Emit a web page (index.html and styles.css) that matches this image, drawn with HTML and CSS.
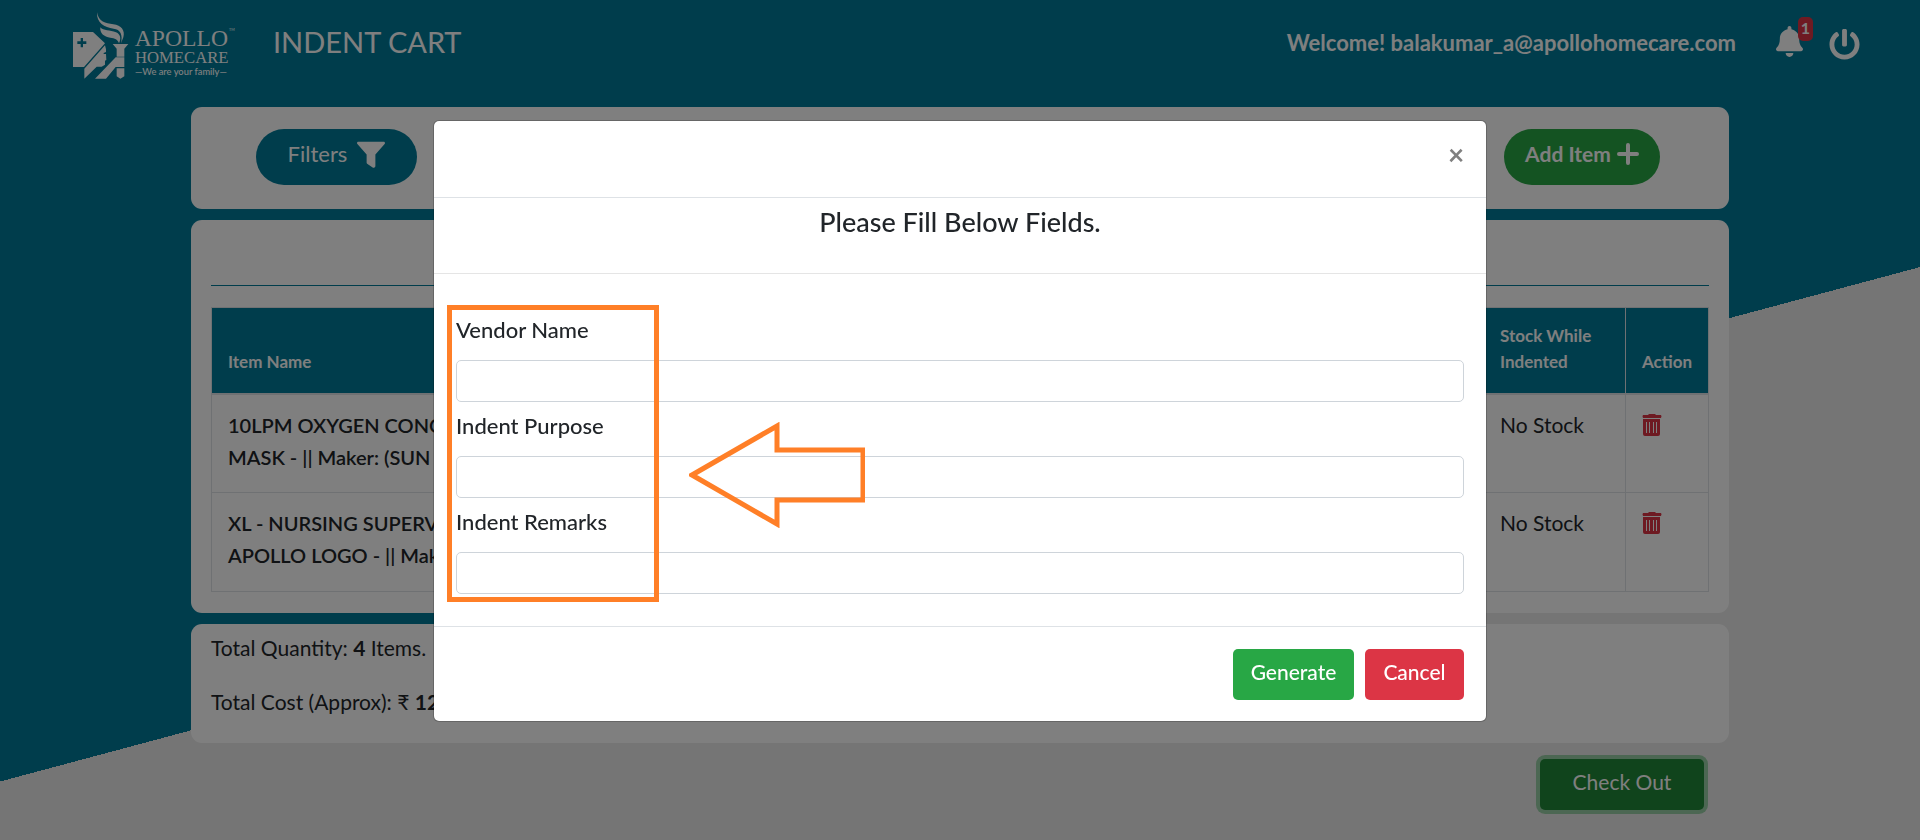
FILE: index.html
```html
<!DOCTYPE html>
<html lang="en">
<head>
<meta charset="utf-8">
<title>Indent Cart</title>
<link rel="stylesheet" href="styles.css">
</head>
<body>
<div class="page">
  <header class="topbar">
    <svg class="logo" viewBox="60 30 510 216" role="img" aria-label="Apollo Homecare">
      <path d="M141 37C146 66 166 70 190 73C214 76 226 92 220 112L213 130C219 104 211 88 191 86C163 83 139 68 141 37Z"/>
      <path d="M151 82C160 93 180 90 198 97C212 103 214 116 207 130C204 118 194 114 181 113C162 111 149 100 151 82Z"/>
      <path fill-rule="evenodd" d="M69 96H129L165 130L102 201H69ZM92 114V124H82V132H92V142H99V132H109V124H99V114Z"/>
      <path d="M103 206L165 136L168 148V156L161 159V162L168 162L169 180L165 182V194L155 200H140L103 236Z"/>
      <path d="M188 132H235L223 146V170H200V146Z"/>
      <path d="M197 172H223V201H197L168 236H135Z"/>
      <path d="M200 205H223V229L211 236L200 229Z"/>
      <text class="logo-name" x="254" y="138">APOLLO</text>
      <text class="logo-sub" x="255" y="190">HOMECARE</text>
      <text class="logo-tag" x="255" y="226">—We are your family—</text>
      <text class="logo-tm" x="537" y="92">TM</text>
    </svg>
    <h1 class="title">INDENT CART</h1>
    <span class="welcome">Welcome! balakumar_a@apollohomecare.com</span>
    <button class="icon-btn bell" type="button" aria-label="Notifications">
      <svg viewBox="0 0 448 512" width="27" height="31"><path d="M224 512c35.320 0 63.970-28.650 63.970-64H160.030c0 35.350 28.650 64 63.970 64zm215.390-149.710c-19.320-20.760-55.470-51.990-55.470-154.290 0-77.700-54.480-139.900-127.940-155.160V32c0-17.670-14.320-32-31.980-32s-31.980 14.330-31.980 32v20.840C118.560 68.100 64.080 130.300 64.080 208c0 102.300-36.150 133.530-55.470 154.290-6 6.450-8.660 14.160-8.610 21.710.110 16.400 12.980 32 32.100 32h383.800c19.120 0 32-15.600 32.100-32 .050-7.550-2.610-15.270-8.610-21.710z"/></svg>
      <span class="count">1</span>
    </button>
    <button class="icon-btn" type="button" aria-label="Log out">
      <svg viewBox="0 0 512 512" width="31" height="31"><path d="M400 54.100c63 45 104 118.600 104 201.900 0 136.800-110.800 247.700-247.500 248C120 504.300 8.200 393 8 256.400 7.900 173.100 48.900 99.300 111.800 54.200c11.700-8.300 28-4.800 35 7.700L162.600 90c5.900 10.500 3.100 23.800-6.600 31-41.500 30.800-68 79.600-68 134.900-.1 92.300 74.500 168.100 168 168.100 91.600 0 168.600-74.200 168-169.100-.3-51.800-24.700-101.800-68.100-134-9.700-7.200-12.400-20.500-6.500-30.900l15.800-28.100c7-12.400 23.200-16.100 34.800-7.800zM296 264V24c0-13.300-10.700-24-24-24h-32c-13.300 0-24 10.700-24 24v240c0 13.300 10.700 24 24 24h32c13.300 0 24-10.700 24-24z"/></svg>
    </button>
  </header>

  <main class="content">
    <section class="card tools">
      <button class="pill filters" type="button">Filters
        <svg viewBox="0 0 512 512" width="28" height="28"><path d="M488 32H24C3 32-8 57 7 72L176 267V416C176 424 180 431 186 436L286 503C302 514 336 503 336 480V267L505 72C520 57 509 32 488 32Z"/></svg>
      </button>
      <button class="pill add" type="button">Add Item
        <svg viewBox="0 0 22 22" width="22" height="22"><path d="M11 2V20M2 11H20" stroke="currentColor" stroke-width="4" stroke-linecap="round"/></svg>
      </button>
    </section>

    <section class="card items">
      <hr class="rule">
      <table class="table">
        <thead>
          <tr><th>Item Name</th><th class="col-stock">Stock While Indented</th><th class="col-action">Action</th></tr>
        </thead>
        <tbody>
          <tr>
            <td class="name">10LPM OXYGEN CONC<br>MASK - || Maker: (SUN</td>
            <td>No Stock</td>
            <td><button class="trash" type="button" aria-label="Delete"><svg viewBox="0 0 20 22" width="20" height="22"><path fill-rule="evenodd" d="M1 1H6L7 0H13L14 1H19Q20 2 19 4H1Q0 2 1 1ZM1 5H18V20Q18 22 16 22H3Q1 22 1 20ZM4 8V19H5V8ZM7 8V19H8V8ZM11 8V19H12V8ZM14 8V19H15V8Z"/></svg></button></td>
          </tr>
          <tr>
            <td class="name">XL - NURSING SUPERV<br>APOLLO LOGO - || Mak</td>
            <td>No Stock</td>
            <td><button class="trash" type="button" aria-label="Delete"><svg viewBox="0 0 20 22" width="20" height="22"><path fill-rule="evenodd" d="M1 1H6L7 0H13L14 1H19Q20 2 19 4H1Q0 2 1 1ZM1 5H18V20Q18 22 16 22H3Q1 22 1 20ZM4 8V19H5V8ZM7 8V19H8V8ZM11 8V19H12V8ZM14 8V19H15V8Z"/></svg></button></td>
          </tr>
        </tbody>
      </table>
    </section>

    <section class="card totals">
      <p>Total Quantity: <b>4</b> Items.</p>
      <p>Total Cost (Approx): ₹ <b>12</b></p>
    </section>

    <div class="checkout-row"><button class="btn checkout" type="button">Check Out</button></div>
  </main>
</div>

<div class="backdrop">
  <form class="modal" role="dialog" aria-labelledby="modal-title">
    <div class="modal-head"><button class="close" type="button" aria-label="Close">×</button></div>
    <h2 class="modal-title" id="modal-title">Please Fill Below Fields.</h2>
    <div class="modal-body">
      <label class="label" for="vendor">Vendor Name</label>
      <input class="input" id="vendor" type="text">
      <label class="label" for="purpose">Indent Purpose</label>
      <input class="input" id="purpose" type="text">
      <label class="label" for="remarks">Indent Remarks</label>
      <input class="input" id="remarks" type="text">
      <div class="highlight"></div>
      <svg class="arrow" viewBox="0 0 176 106" width="176" height="106"><path d="M3 53L88 4V28H174V78H88V102Z"/></svg>
    </div>
    <div class="modal-foot">
      <button class="btn generate" type="submit">Generate</button>
      <button class="btn cancel" type="button">Cancel</button>
    </div>
  </form>
</div>
</body>
</html>
```

FILE: styles.css
```css
* { box-sizing: border-box; }

body {
  margin: 0;
  font-family: Lato, "Noto Sans", sans-serif;
  font-size: 21px;
  line-height: 32px;
  color: #212529;
}

button, input { font: inherit; color: inherit; }
button { border: 0; background: none; padding: 0; cursor: pointer; }
svg { fill: currentColor; flex: none; display: block; }
h1, h2, p { margin: 0; font-weight: 400; }

.page {
  min-height: 100vh;
  background: linear-gradient(165deg, #007b99 57.7%, #ebebeb 57.7%);
}

.topbar {
  display: flex;
  align-items: flex-start;
  height: 107px;
  padding: 10px 60px 0 70px;
  color: #fff;
}
.logo { width: 170px; height: 72px; }
.logo-name { font: 71px "Liberation Serif", serif; }
.logo-sub { font: 50px "Liberation Serif", serif; }
.logo-tag { font: 500 28px Lato, sans-serif; }
.logo-tm { font: 11px Lato, sans-serif; }
.title { margin-left: 33px; padding-top: 12px; font-size: 29px; line-height: 40px; }
.welcome { margin-left: auto; padding-top: 17px; font-size: 22px; font-weight: 700; }
.icon-btn { margin: 19px 0 0 26px; }
.bell { position: relative; margin: 16px 0 0 40px; }
.count {
  position: absolute;
  left: 22px;
  top: -9px;
  width: 15px;
  height: 24px;
  border-radius: 5px;
  background: #dc3545;
  font-size: 16px;
  font-weight: 700;
  line-height: 22px;
}

.content { width: calc(80% + 2px); margin: 0 auto; }
.card { margin-bottom: 11px; border-radius: 11px; background: #fff; }
.tools { display: flex; justify-content: space-between; padding: 22px 69px 24px 65px; }
.pill {
  display: flex;
  justify-content: center;
  height: 56px;
  padding-top: 9px;
  border-radius: 28px;
  color: #fff;
}
.filters { width: 161px; gap: 10px; background: #007b99; font-size: 22px; }
.filters svg { margin-top: 2px; }
.add { width: 156px; gap: 6px; background: #28a745; font-weight: 700; }
.add svg { margin-top: 5px; }

.items { padding: 65px 20px 21px; }
.rule { height: 1px; margin: 0 0 21px; border: 0; background: #007b99; }
.table { width: 100%; border-collapse: collapse; table-layout: fixed; }
.table th, .table td { border: 1px solid #dee2e6; padding: 14px 16px; text-align: left; vertical-align: top; }
.table th {
  height: 86px;
  padding-bottom: 18px;
  background: #007b99;
  background-clip: padding-box;
  border-bottom-width: 2px;
  color: #fff;
  font-size: 17px;
  line-height: 26px;
  vertical-align: bottom;
}
.table td { height: 99px; }
.table .name { font-size: 20px; font-weight: 600; white-space: nowrap; }
.col-stock { width: 142px; }
.col-action { width: 83px; }
.trash { display: block; padding-top: 5px; color: #dc3545; }

.totals { padding: 8px 20px 25px; }
.totals p + p { margin-top: 22px; }

.btn { height: 51px; padding: 0 17px 5px; border-radius: 5px; color: #fff; }
.checkout-row { display: flex; justify-content: flex-end; padding: 5px 25px 0; }
.checkout { width: 164px; background: #218838; box-shadow: 0 0 0 4px rgba(72, 180, 97, .5); }

.backdrop { position: fixed; inset: 0; padding-top: 120px; background: rgba(0, 0, 0, .5); }
.modal {
  width: calc(55% - 2px);
  margin: 0 auto;
  border: 1px solid rgba(0, 0, 0, .2);
  border-radius: 6px;
  background: #fff;
  background-clip: padding-box;
}
.modal-head { display: flex; justify-content: flex-end; align-items: flex-start; height: 77px; padding: 17px 22px; border-bottom: 1px solid #dee2e6; }
.close { width: 16px; color: #808080; font-size: 28px; font-weight: 700; }
.modal-title { height: 76px; padding-top: 8px; border-bottom: 1px solid #e5e5e5; font-size: 27px; font-weight: 500; text-align: center; }
.modal-body { position: relative; padding: 32px 22px; }
.label { display: block; height: 54px; padding-top: 8px; font-size: 22px; font-weight: 500; }
.input { display: block; width: 100%; height: 42px; padding: 6px 12px; border: 1px solid #ced4da; border-radius: 5px; background: #fff; }
.highlight { position: absolute; left: 13px; top: 31px; width: 212px; height: 297px; border: 5px solid #ff7f27; pointer-events: none; }
.arrow { position: absolute; left: 255px; top: 148px; fill: none; stroke: #ff7f27; stroke-width: 5; pointer-events: none; }
.modal-foot { display: flex; justify-content: flex-end; gap: 11px; padding: 22px 22px 21px; border-top: 1px solid #dee2e6; }
.generate { min-width: 121px; background: #28a745; font-weight: 500; }
.cancel { min-width: 99px; background: #dc3545; font-weight: 500; }
```
